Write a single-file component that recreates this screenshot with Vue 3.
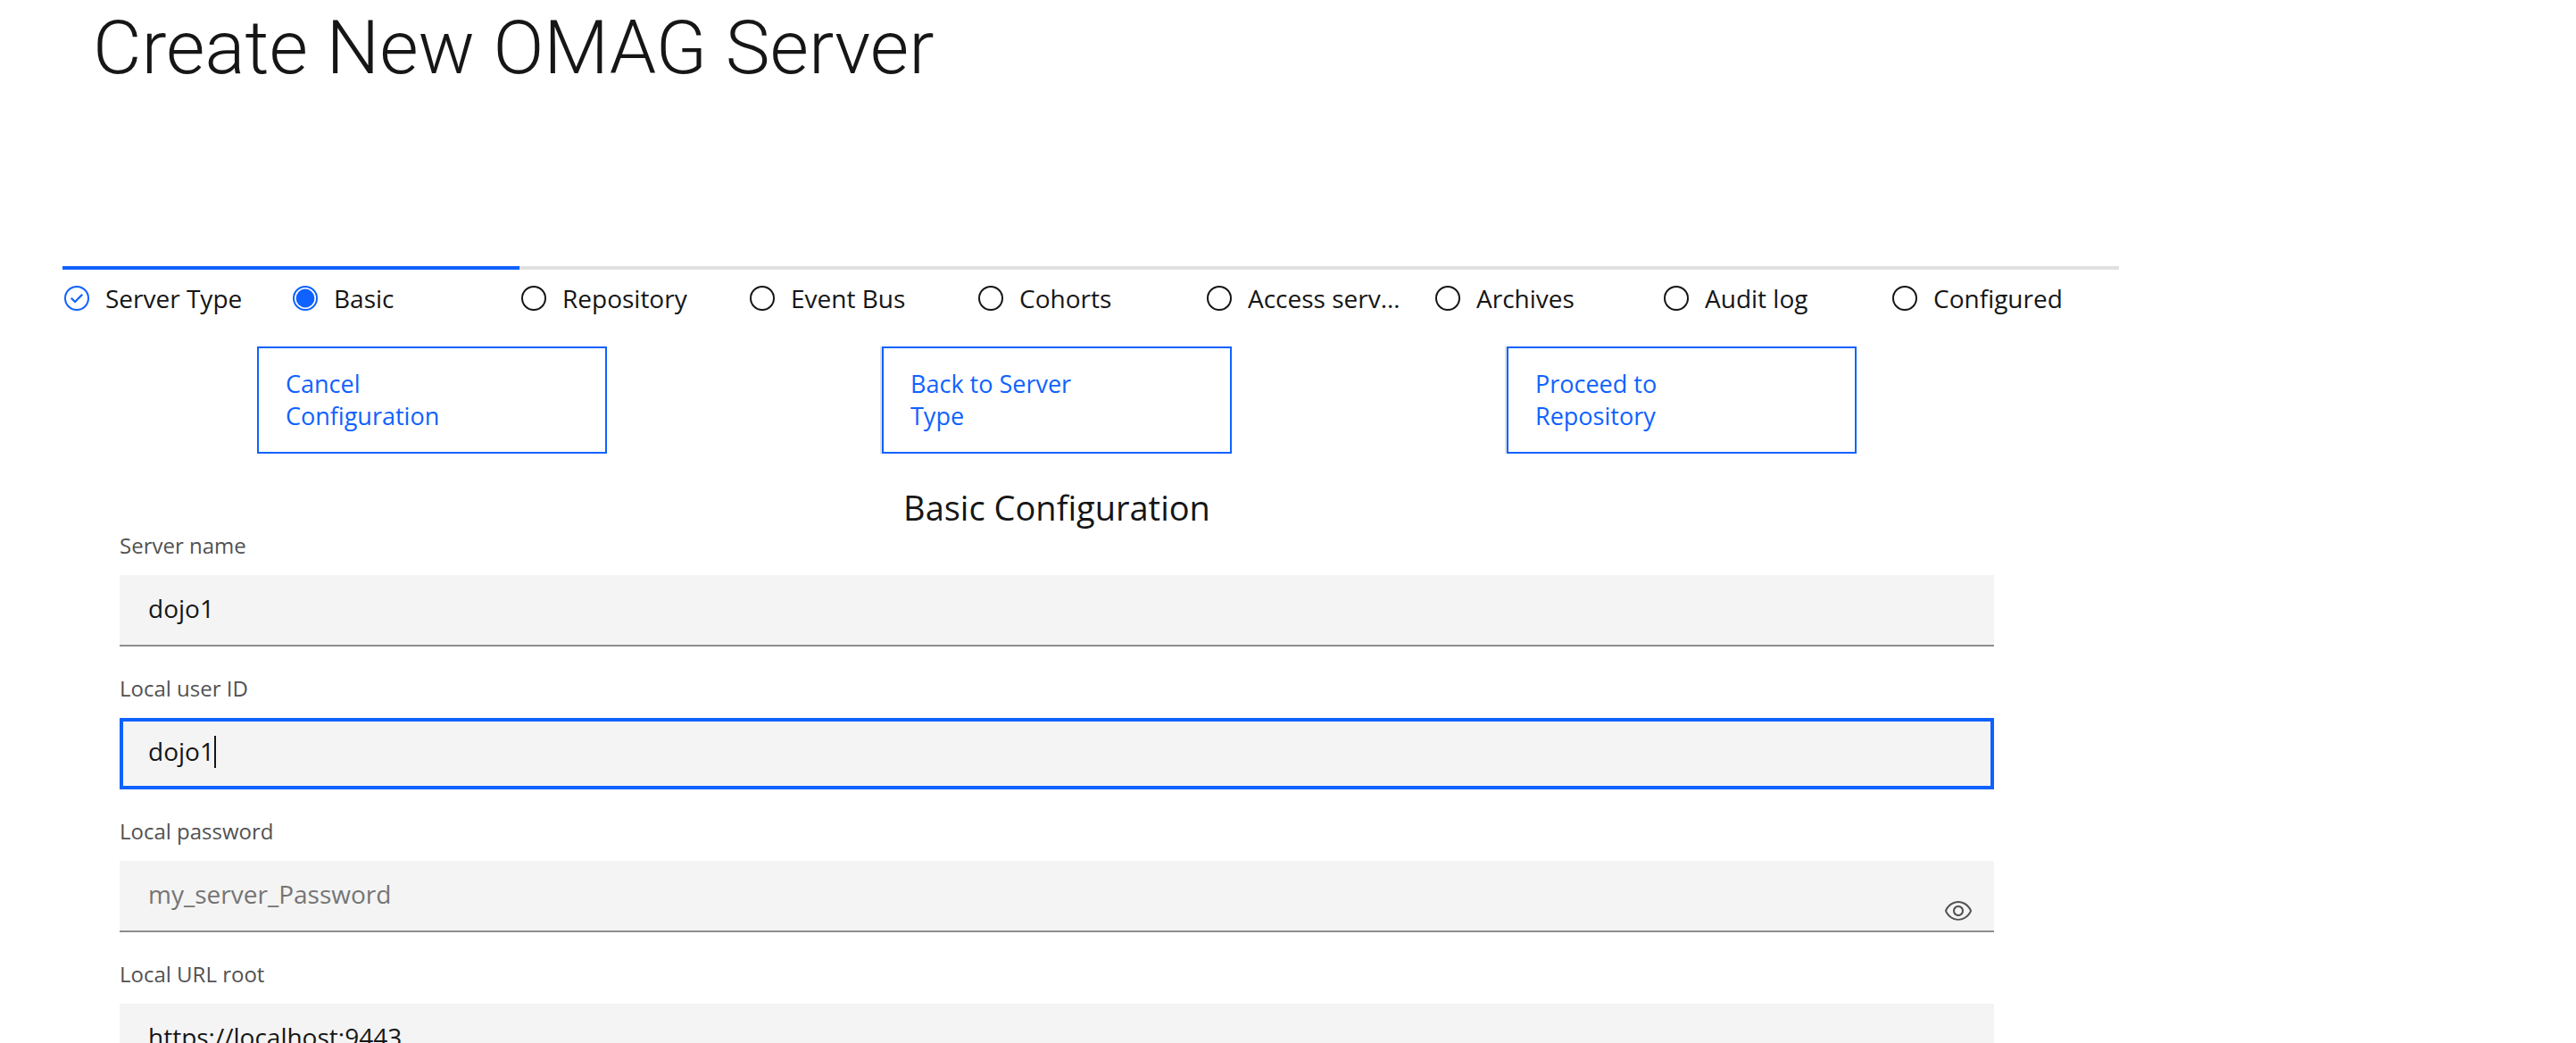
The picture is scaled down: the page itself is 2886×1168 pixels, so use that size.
<script setup>
import { ref } from 'vue'

const steps = ['Server Type', 'Basic', 'Repository', 'Event Bus', 'Cohorts', 'Access services', 'Archives', 'Audit log', 'Configured']
const current = 1

const actions = ['Cancel Configuration', 'Back to Server Type', 'Proceed to Repository']

const fields = ref([
  { id: 'server-name', label: 'Server name', type: 'text', value: 'dojo1' },
  { id: 'user-id', label: 'Local user ID', type: 'text', value: 'dojo1', active: true },
  { id: 'password', label: 'Local password', type: 'password', value: '', placeholder: 'my_server_Password' },
  { id: 'url-root', label: 'Local URL root', type: 'text', value: 'https://localhost:9443' },
])
const revealed = ref(false)
</script>

<template>
  <main class="page">
    <h1 class="title">Create New OMAG Server</h1>

    <ol class="progress">
      <li v-for="(step, i) in steps" :key="step" class="step" :class="{ reached: i <= current }">
        <button type="button" class="step-button" :aria-current="i === current ? 'step' : undefined">
          <svg class="icon" viewBox="0 0 16 16" aria-hidden="true">
            <circle class="ring" cx="8" cy="8" r="6.5" />
            <path v-if="i < current" class="solid" d="M7 10.8 4.5 8.3 5.3 7.5 7 9.2 10.7 5.5 11.5 6.3z" />
            <circle v-else-if="i === current" class="solid" cx="8" cy="8" r="5.2" />
          </svg>
          <span class="step-label">{{ step }}</span>
        </button>
      </li>
    </ol>

    <form class="config" @submit.prevent>
      <div class="actions">
        <div v-for="action in actions" :key="action" class="action-cell">
          <button type="button" class="action">{{ action }}</button>
        </div>
      </div>

      <h4 class="heading">Basic Configuration</h4>

      <div v-for="field in fields" :key="field.id" class="field">
        <label class="label" :for="field.id">{{ field.label }}</label>
        <div class="control">
          <input
            :id="field.id"
            v-model="field.value"
            class="input"
            :class="{ active: field.active }"
            :type="field.type === 'password' && revealed ? 'text' : field.type"
            :placeholder="field.placeholder"
          />
          <span v-if="field.active" class="caret"></span>
          <button v-if="field.type === 'password'" type="button" class="reveal" aria-label="Show password" @click="revealed = !revealed">
            <svg class="icon" viewBox="0 0 16 16" aria-hidden="true">
              <path d="M15.5,7.8C14.3,4.7,11.3,2.6,8,2.5C4.7,2.6,1.7,4.7,0.5,7.8c0,0.1,0,0.2,0,0.3c1.2,3.1,4.1,5.2,7.5,5.3c3.3-0.1,6.3-2.2,7.5-5.3C15.5,8.1,15.5,7.9,15.5,7.8z M8,12.5c-2.7,0-5.4-2-6.5-4.5c1-2.5,3.8-4.5,6.5-4.5s5.4,2,6.5,4.5C13.4,10.5,10.6,12.5,8,12.5z" />
              <path d="M8,5C6.3,5,5,6.3,5,8s1.3,3,3,3s3-1.3,3-3S9.7,5,8,5z M8,10c-1.1,0-2-0.9-2-2s0.9-2,2-2s2,0.9,2,2S9.1,10,8,10z" />
            </svg>
          </button>
        </div>
      </div>
    </form>
  </main>
</template>

<style>
body {
  margin: 0;
  background: #fff;
}
</style>

<style scoped>
.page {
  box-sizing: border-box;
  height: 100vh;
  overflow: hidden;
  padding: 4px 512px 0 70px;
  color: #161616;
  font-family: "Open Sans", "Noto Sans", sans-serif;
  font-size: 28px;
}
.title {
  margin: 0 34px 194px;
  font-family: Roboto, sans-serif;
  font-size: 84px;
  font-weight: 300;
  line-height: 100px;
}
.progress {
  display: grid;
  grid-template-columns: repeat(9, minmax(0, 1fr));
  margin: 0;
  padding: 0;
  list-style: none;
}
.step {
  border-top: 4px solid #e0e0e0;
}
.step.reached {
  border-top-color: #0f62fe;
}
.step-button {
  display: flex;
  align-items: center;
  gap: 16px;
  width: 100%;
  padding: 12px 0 0;
  border: 0;
  background: none;
  color: inherit;
  font: inherit;
  line-height: 40px;
  text-align: left;
}
.icon {
  flex: none;
  display: block;
  width: 32px;
  height: 32px;
  fill: currentColor;
}
.ring {
  fill: none;
  stroke: currentColor;
}
.reached .icon {
  color: #0f62fe;
}
.step-label {
  max-width: 176px;
  overflow: hidden;
  text-overflow: ellipsis;
  white-space: nowrap;
}
.config {
  margin: 34px 140px 0 64px;
}
.actions {
  display: grid;
  grid-template-columns: repeat(3, 1fr);
}
.action-cell {
  display: flex;
  justify-content: center;
}
.action {
  width: 56%;
  padding: 22px 126px 22px 30px;
  border: 2px solid #0f62fe;
  background: #fff;
  color: #0f62fe;
  font-family: inherit;
  font-size: 27px;
  line-height: 36px;
  text-align: left;
}
.action-cell + .action-cell .action {
  box-shadow: -2px 0 0 #e0e0e0;
}
.heading {
  margin: 32px 0 0;
  font-size: 38px;
  font-weight: 400;
  line-height: 56px;
  text-align: center;
}
.field {
  margin-bottom: 32px;
}
.label {
  display: block;
  margin-bottom: 18px;
  color: #525252;
  font-size: 24px;
  line-height: 30px;
}
.control {
  position: relative;
}
.input {
  display: block;
  box-sizing: border-box;
  width: 100%;
  height: 80px;
  padding: 0 32px 4px;
  border: 0;
  border-bottom: 2px solid #8d8d8d;
  border-radius: 0;
  outline: 4px solid transparent;
  outline-offset: -4px;
  background: #f4f4f4;
  color: #161616;
  font: inherit;
}
.input.active,
.input:focus {
  outline-color: #0f62fe;
}
.input::placeholder {
  color: #757575;
  opacity: 1;
}
.caret {
  position: absolute;
  top: 20px;
  left: 106px;
  width: 2px;
  height: 36px;
  background: #161616;
}
.reveal {
  position: absolute;
  right: 24px;
  bottom: 8px;
  padding: 0;
  border: 0;
  background: none;
  color: #525252;
}
</style>
